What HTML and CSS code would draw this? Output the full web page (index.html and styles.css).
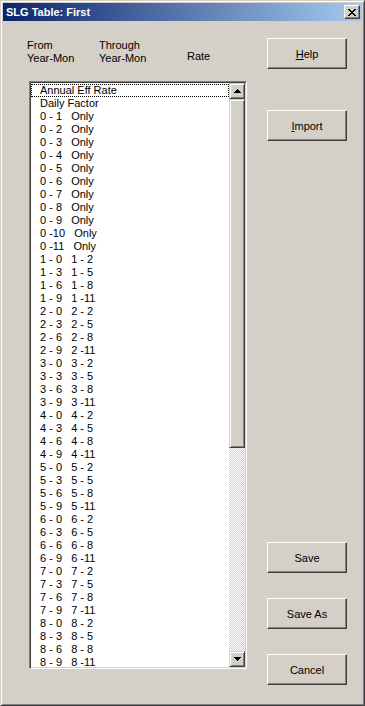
FILE: index.html
```html
<!DOCTYPE html>
<html lang="en">
<head>
    <meta charset="UTF-8">
    <meta name="viewport" content="width=device-width, initial-scale=1.0">
    <title>SLG Table: First</title>
    <link rel="stylesheet" href="styles.css">
</head>
<body>

<div class="window">
    <!-- Title bar -->
    <div class="titlebar">
        <span class="title">SLG Table: First</span>
        <button class="close-btn" title="Close">
            <svg width="8" height="7" viewBox="0 0 8 7" shape-rendering="crispEdges">
                <path d="M0 0h2v1h-2zM6 0h2v1h-2zM1 1h2v1h-2zM5 1h2v1h-2zM2 2h4v1h-4zM3 3h2v1h-2zM2 4h4v1h-4zM1 5h2v1h-2zM5 5h2v1h-2zM0 6h2v1h-2zM6 6h2v1h-2z" fill="#000"/>
            </svg>
        </button>
    </div>

    <div class="client">
        <!-- Left side: column headers and the list -->
        <div class="left-col">
            <div class="headers">
                <div class="hdr hdr-from">From<br>Year-Mon</div>
                <div class="hdr hdr-through">Through<br>Year-Mon</div>
                <div class="hdr hdr-rate">Rate</div>
            </div>

            <div class="listbox">
                <ul class="items">
                    <li class="focused">Annual Eff Rate</li>
                    <li>Daily Factor</li>
                    <li>0 - 1   Only</li>
                    <li>0 - 2   Only</li>
                    <li>0 - 3   Only</li>
                    <li>0 - 4   Only</li>
                    <li>0 - 5   Only</li>
                    <li>0 - 6   Only</li>
                    <li>0 - 7   Only</li>
                    <li>0 - 8   Only</li>
                    <li>0 - 9   Only</li>
                    <li>0 -10   Only</li>
                    <li>0 -11   Only</li>
                    <li>1 - 0   1 - 2</li>
                    <li>1 - 3   1 - 5</li>
                    <li>1 - 6   1 - 8</li>
                    <li>1 - 9   1 -11</li>
                    <li>2 - 0   2 - 2</li>
                    <li>2 - 3   2 - 5</li>
                    <li>2 - 6   2 - 8</li>
                    <li>2 - 9   2 -11</li>
                    <li>3 - 0   3 - 2</li>
                    <li>3 - 3   3 - 5</li>
                    <li>3 - 6   3 - 8</li>
                    <li>3 - 9   3 -11</li>
                    <li>4 - 0   4 - 2</li>
                    <li>4 - 3   4 - 5</li>
                    <li>4 - 6   4 - 8</li>
                    <li>4 - 9   4 -11</li>
                    <li>5 - 0   5 - 2</li>
                    <li>5 - 3   5 - 5</li>
                    <li>5 - 6   5 - 8</li>
                    <li>5 - 9   5 -11</li>
                    <li>6 - 0   6 - 2</li>
                    <li>6 - 3   6 - 5</li>
                    <li>6 - 6   6 - 8</li>
                    <li>6 - 9   6 -11</li>
                    <li>7 - 0   7 - 2</li>
                    <li>7 - 3   7 - 5</li>
                    <li>7 - 6   7 - 8</li>
                    <li>7 - 9   7 -11</li>
                    <li>8 - 0   8 - 2</li>
                    <li>8 - 3   8 - 5</li>
                    <li>8 - 6   8 - 8</li>
                    <li>8 - 9   8 -11</li>
                </ul>

                <!-- Vertical scrollbar -->
                <div class="scrollbar">
                    <div class="sb-btn">
                        <svg width="7" height="4" viewBox="0 0 7 4" shape-rendering="crispEdges"><path d="M3 0h1v1h-1zM2 1h3v1h-3zM1 2h5v1h-5zM0 3h7v1h-7z" fill="#000"/></svg>
                    </div>
                    <div class="sb-thumb"></div>
                    <div class="sb-track"></div>
                    <div class="sb-btn">
                        <svg width="7" height="4" viewBox="0 0 7 4" shape-rendering="crispEdges"><path d="M0 0h7v1h-7zM1 1h5v1h-5zM2 2h3v1h-3zM3 3h1v1h-1z" fill="#000"/></svg>
                    </div>
                </div>
            </div>
        </div>

        <!-- Right side: command buttons -->
        <div class="right-col">
            <button class="btn"><u>H</u>elp</button>
            <button class="btn btn-import"><u>I</u>mport</button>
            <button class="btn btn-save">Save</button>
            <button class="btn">Save As</button>
            <button class="btn">Cancel</button>
        </div>
    </div>
</div>

</body>
</html>
```

FILE: styles.css
```css
* {
    box-sizing: border-box;
}

body {
    margin: 0;
    font-family: "Liberation Sans", Arial, sans-serif;
    font-size: 11px;
    color: #000;
    background: #d4d0c8;
}

/* Dialog frame */
.window {
    width: 365px;
    height: 706px;
    display: flex;
    flex-direction: column;
    background: #d4d0c8;
    border-top: 1px solid #d4d0c8;
    border-left: 1px solid #d4d0c8;
    border-right: 1px solid #404040;
    border-bottom: 1px solid #404040;
    box-shadow: inset 1px 1px #fff, inset -1px -1px #808080;
    padding: 2px;
}

/* Title bar */
.titlebar {
    height: 18px;
    display: flex;
    align-items: center;
    justify-content: space-between;
    padding: 0 2px 0 3px;
    background: linear-gradient(to right, #0a246a, #a6caf0);
}

.title {
    color: #fff;
    font-weight: bold;
    font-size: 11px;
    line-height: 13px;
}

.close-btn {
    width: 16px;
    height: 14px;
    padding: 0;
    display: flex;
    align-items: center;
    justify-content: center;
    background: #d4d0c8;
    border-top: 1px solid #fff;
    border-left: 1px solid #fff;
    border-right: 1px solid #404040;
    border-bottom: 1px solid #404040;
    box-shadow: inset -1px -1px #808080;
}

/* Client area */
.client {
    flex: 1;
    display: flex;
    gap: 20px;
    padding: 17px 15px 18px 24px;
}

.left-col {
    width: 220px;
    padding-top: 1px;
}

.headers {
    display: flex;
    line-height: 13px;
    height: 42px;
}

.hdr-from {
    width: 72px;
}

.hdr-through {
    width: 88px;
}

.hdr-rate {
    padding-top: 11px;
}

/* List box */
.listbox {
    margin-left: 2px;
    width: 218px;
    height: 588px;
    display: flex;
    background: #fff;
    border-top: 1px solid #808080;
    border-left: 1px solid #808080;
    border-right: 1px solid #fff;
    border-bottom: 1px solid #fff;
    box-shadow: inset 1px 1px #404040, inset -1px -1px #d4d0c8;
    padding: 1px;
}

.items {
    flex: 1;
    list-style: none;
    margin: 0;
    padding: 1px 0 0 0;
    overflow: hidden;
}

.items li {
    height: 13px;
    line-height: 13px;
    padding-left: 9px;
    white-space: pre;
}

.items li.focused {
    outline: 1px dotted #000;
    outline-offset: -1px;
}

.scrollbar {
    width: 16px;
    display: flex;
    flex-direction: column;
}

.sb-btn,
.sb-thumb {
    background: #d4d0c8;
    border-top: 1px solid #d4d0c8;
    border-left: 1px solid #d4d0c8;
    border-right: 1px solid #404040;
    border-bottom: 1px solid #404040;
    box-shadow: inset 1px 1px #fff, inset -1px -1px #808080;
}

.sb-btn {
    height: 16px;
    display: flex;
    align-items: center;
    justify-content: center;
}

.sb-thumb {
    height: 349px;
}

.sb-track {
    flex: 1;
    background-image: conic-gradient(#fff 25%, #d4d0c8 0 50%, #fff 0 75%, #d4d0c8 0);
    background-size: 2px 2px;
}

/* Buttons */
.right-col {
    display: flex;
    flex-direction: column;
}

.btn {
    width: 80px;
    height: 31px;
    margin-bottom: 25px;
    padding: 0;
    font-family: "Liberation Sans", Arial, sans-serif;
    font-size: 11px;
    color: #000;
    background: #d4d0c8;
    border-top: 1px solid #fff;
    border-left: 1px solid #fff;
    border-right: 1px solid #404040;
    border-bottom: 1px solid #404040;
    box-shadow: inset -1px -1px #808080;
}

.btn:first-child {
    margin-bottom: 41px;
}

.btn:last-child {
    margin-bottom: 0;
}

.btn-save {
    margin-top: auto;
}
```
